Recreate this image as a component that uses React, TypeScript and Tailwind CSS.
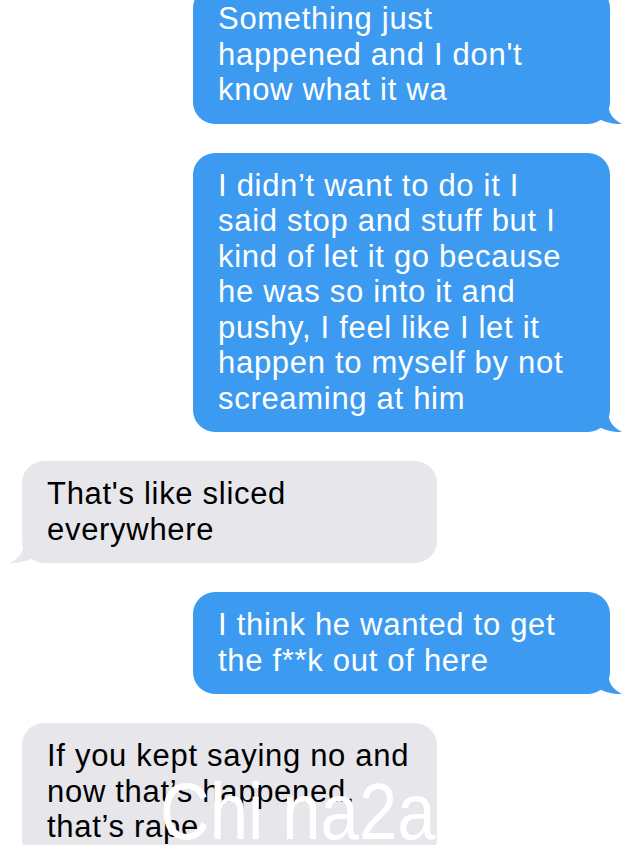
const font = { fontFamily: '"Liberation Sans", Arial, sans-serif' };

type Msg = { from: 'me' | 'them'; lines: string[] };

const messages: Msg[] = [
  { from: 'me', lines: ['Something just', "happened and I don't", 'know what it wa'] },
  {
    from: 'me',
    lines: [
      'I didn’t want to do it I',
      'said stop and stuff but I',
      'kind of let it go because',
      'he was so into it and',
      'pushy, I feel like I let it',
      'happen to myself by not',
      'screaming at him',
    ],
  },
  { from: 'them', lines: ["That's like sliced", 'everywhere'] },
  { from: 'me', lines: ['I think he wanted to get', 'the f**k out of here'] },
  { from: 'them', lines: ['If you kept saying no and', 'now that’s happened,', 'that’s rape'] },
];

function Tail({ side }: { side: 'me' | 'them' }) {
  if (side === 'me') {
    return (
      <svg className="absolute -right-[12px] bottom-0" width="24" height="22" viewBox="0 0 24 22">
        <path d="M0 0 L10 0 C10 10 14 17 24 22 C14 22 6 20 0 16 Z" fill="#3c9bf0" />
      </svg>
    );
  }
  return (
    <svg className="absolute -left-[12px] bottom-0" width="24" height="22" viewBox="0 0 24 22">
      <path d="M24 0 L14 0 C14 10 10 17 0 22 C10 22 18 20 24 16 Z" fill="#e6e6eb" />
    </svg>
  );
}

function Bubble({ msg, first }: { msg: Msg; first?: boolean }) {
  const me = msg.from === 'me';
  return (
    <div
      className={`relative rounded-[22px] pl-[25px] pt-[15px] pb-[16px] text-[31px] leading-[35.5px] tracking-[0.7px] ${
        me ? 'ml-[193px] w-[417px] bg-[#3c9bf0] text-white' : 'ml-[22px] w-[415px] bg-[#e6e6eb] text-black'
      } ${first ? '-mt-[14px]' : ''}`}
      style={font}
    >
      {msg.lines.map((l) => (
        <div key={l} className="whitespace-nowrap">
          {l}
        </div>
      ))}
      <Tail side={msg.from} />
    </div>
  );
}

export default function App() {
  return (
    <div className="relative h-[845px] w-[634px] overflow-hidden bg-white">
      <div className="flex flex-col gap-[29px]">
        {messages.map((m, i) => (
          <Bubble key={i} msg={m} first={i === 0} />
        ))}
      </div>
      <div
        className="absolute left-[160px] top-[772px] origin-left scale-x-[0.86] whitespace-nowrap text-[80px] leading-none text-white"
        style={font}
      >
        Chi na2a
      </div>
    </div>
  );
}
